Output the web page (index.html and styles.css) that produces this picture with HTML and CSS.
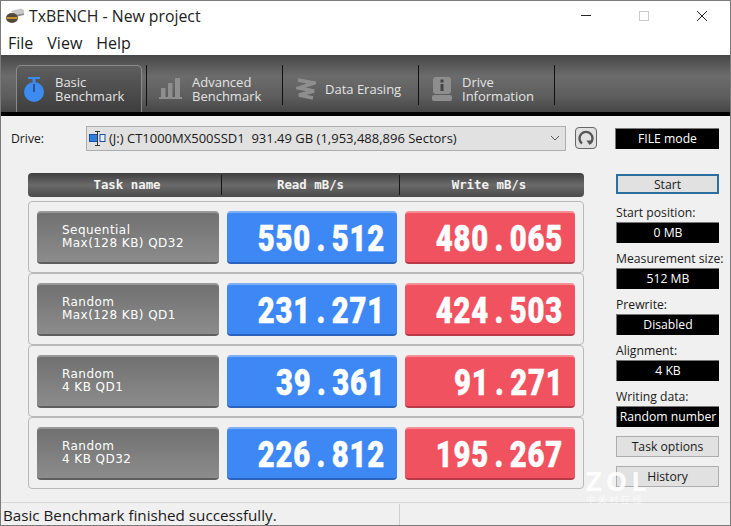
FILE: index.html
```html
<!DOCTYPE html>
<html lang="en">
<head>
<meta charset="utf-8">
<title>TxBENCH - New project</title>
<link rel="stylesheet" href="styles.css">
</head>
<body>
<div class="window">
  <header class="titlebar">
    <svg class="app-icon" width="20" height="16" viewBox="0 0 20 16"><path d="M6 3 L16 0.5 L19 2 L19 6 L10 8 Z" fill="#c9c9c9"/><path d="M10 7 L19 5.5 L19 7 L10 9Z" fill="#8f8f8f"/><ellipse cx="7" cy="10" rx="6" ry="5" fill="#4f4a3c"/><path d="M1.5 9 H12.5 V11 H1.5Z" fill="#c98f2c"/></svg>
    <span class="app-title">TxBENCH - New project</span>
    <div class="win-controls">
      <svg width="12" height="12" viewBox="0 0 12 12"><path d="M1 5.5H11" stroke="#222" stroke-width="1"/></svg>
      <svg width="12" height="12" viewBox="0 0 12 12"><rect x="1.5" y="1.5" width="9" height="9" fill="none" stroke="#ccc"/></svg>
      <svg width="12" height="12" viewBox="0 0 12 12"><path d="M1 1L11 11M11 1L1 11" stroke="#222" stroke-width="1"/></svg>
    </div>
  </header>
  <nav class="menubar"><span>File</span><span>View</span><span>Help</span></nav>
  <div class="toolbar">
    <div class="tab tab-active">
      <svg width="20" height="25" viewBox="0 0 20 25"><rect x="4" y="0" width="12" height="2" fill="#3d8af0"/><rect x="8.5" y="2" width="3" height="3" fill="#3d8af0"/><circle cx="10" cy="15" r="10" fill="#3d8af0"/><path d="M10 7V15" stroke="#1d3a66" stroke-width="1.3"/></svg>
      <span class="tab-label">Basic<br>Benchmark</span>
    </div>
    <div class="tab tab-adv">
      <svg width="24" height="21" viewBox="0 0 24 21"><g fill="#8e8e8e"><rect x="2" y="10" width="4.5" height="9"/><rect x="9" y="5" width="4.5" height="14"/><rect x="16" y="0" width="5" height="19"/><rect x="0" y="19" width="23" height="2"/></g></svg>
      <span class="tab-label">Advanced<br>Benchmark</span>
    </div>
    <div class="tab tab-erase">
      <svg width="20" height="22" viewBox="0 0 20 22"><path d="M2 2L18 5L3 10L18 13L3 17L17 20" fill="none" stroke="#8e8e8e" stroke-width="3.6"/></svg>
      <span class="tab-label">Data Erasing</span>
    </div>
    <div class="tab tab-info">
      <svg width="20" height="24" viewBox="0 0 20 24"><rect x="1" y="0" width="18" height="17" rx="3" fill="#8e8e8e"/><rect x="8.5" y="2.5" width="3" height="3" fill="#444"/><rect x="8.5" y="7" width="3" height="7" fill="#444"/><rect x="0" y="18" width="20" height="6" rx="2" fill="#8e8e8e"/></svg>
      <span class="tab-label">Drive<br>Information</span>
    </div>
  </div>
  <div class="content">
    <div class="drive-row">
      <span class="drive-label">Drive:</span>
      <div class="drive-select">
        <svg width="17" height="15" viewBox="0 0 17 15"><rect x="0.5" y="3.5" width="8" height="7" fill="#2f7de0" stroke="#1c4f9c"/><rect x="11" y="3.5" width="5" height="7" fill="#e8f0fa" stroke="#1c4f9c"/><path d="M6 0.5H11M8.5 0.5V14.5M6 14.5H11" stroke="#333" fill="none"/></svg>
        <span class="drive-text">(J:) CT1000MX500SSD1&nbsp; 931.49 GB (1,953,488,896 Sectors)</span>
        <svg class="chevron" width="10" height="6" viewBox="0 0 10 6"><path d="M1 1L5 5L9 1" fill="none" stroke="#555"/></svg>
      </div>
      <div class="refresh">
        <svg width="18" height="18" viewBox="0 0 18 18"><path d="M5 14.5A6.5 6.5 0 1 1 13 14.5" fill="none" stroke="#555" stroke-width="2.4"/><path d="M9.5 11.5H15.5L12.5 16Z" fill="#555"/></svg>
      </div>
      <div class="mode">FILE mode</div>
    </div>
    <div class="main">
      <section class="results">
        <div class="table-head"><span>Task name</span><span>Read mB/s</span><span>Write mB/s</span></div>
        <div class="row">
          <div class="task">Sequential<br>Max(128 KB) QD32</div>
          <div class="value read"><span class="num">550<span class="dot">.</span>512</span></div>
          <div class="value write"><span class="num">480<span class="dot">.</span>065</span></div>
        </div>
        <div class="row">
          <div class="task">Random<br>Max(128 KB) QD1</div>
          <div class="value read"><span class="num">231<span class="dot">.</span>271</span></div>
          <div class="value write"><span class="num">424<span class="dot">.</span>503</span></div>
        </div>
        <div class="row">
          <div class="task">Random<br>4 KB QD1</div>
          <div class="value read"><span class="num">39<span class="dot">.</span>361</span></div>
          <div class="value write"><span class="num">91<span class="dot">.</span>271</span></div>
        </div>
        <div class="row">
          <div class="task">Random<br>4 KB QD32</div>
          <div class="value read"><span class="num">226<span class="dot">.</span>812</span></div>
          <div class="value write"><span class="num">195<span class="dot">.</span>267</span></div>
        </div>
      </section>
      <aside class="side">
        <button class="btn btn-start">Start</button>
        <div class="field"><label>Start position:</label><div class="box">0 MB</div></div>
        <div class="field"><label>Measurement size:</label><div class="box">512 MB</div></div>
        <div class="field"><label>Prewrite:</label><div class="box">Disabled</div></div>
        <div class="field"><label>Alignment:</label><div class="box">4 KB</div></div>
        <div class="field"><label>Writing data:</label><div class="box">Random number</div></div>
        <button class="btn btn-options">Task options</button>
        <button class="btn btn-history">History</button>
      </aside>
    </div>
  </div>
  <footer class="statusbar"><span class="status-main">Basic Benchmark finished successfully.</span><span class="status-cell"></span></footer>
  <div class="watermark"><span class="wm-logo">ZOL</span><span class="wm-sub">中关村在线</span></div>
</div>
</body>
</html>
```
FILE: styles.css
```css
* { box-sizing: border-box; }
html, body { margin: 0; padding: 0; }
body { width: 731px; height: 526px; overflow: hidden; font-family: "Open Sans", "Noto Sans", sans-serif; color: #1a1a1a; }
.window { position: relative; width: 731px; height: 526px; border: 1px solid #7a7a7a; background: #f0f0f0; display: flex; flex-direction: column; overflow: hidden; }
.titlebar { height: 29px; background: #fff; display: flex; align-items: center; padding-left: 4px; flex: none; }
.app-icon { margin-right: 4px; }
.app-title { font-size: 15.8px; color: #222; }
.win-controls { margin-left: auto; display: flex; gap: 46px; padding-right: 22px; }
.menubar { height: 25px; background: #fff; display: flex; gap: 14px; padding-left: 7px; font-size: 16px; line-height: 26px; flex: none; }
.toolbar { height: 61px; flex: none; display: flex; align-items: flex-start; padding: 10px 0 0 15px; background: linear-gradient(#474747, #6c6c6c 35%, #5c5c5c 70%, #454545 94%, #000 94%); }
.tab { height: 47px; display: flex; align-items: center; color: #e4e4e4; font-size: 13px; line-height: 14px; position: relative; }
.tab::after { content: ""; position: absolute; right: 0; top: 0; width: 1px; height: 40px; background: #111; }
.tab-label { display: block; }
.tab-active { width: 126px; padding-left: 7px; gap: 11px; border: 1px solid #8a8a8a; border-bottom: none; border-radius: 5px 5px 0 0; background: linear-gradient(#5e5e5e, #3e3e3e); margin-right: 4px; }
.tab-active::after { display: none; }
.tab-adv { width: 137px; padding-left: 12px; gap: 9px; border-image: linear-gradient(#111 85%, transparent 85%) 1; border-left: 1px solid; }
.tab-erase { width: 136px; padding-left: 13px; gap: 9px; }
.tab-info { width: 136px; padding-left: 13px; gap: 10px; }
.content { flex: 1; display: flex; flex-direction: column; padding: 9px 11px 0 10px; min-height: 0; }
.drive-row { display: flex; align-items: center; height: 26px; flex: none; }
.drive-label { width: 75px; font-size: 12.2px; }
.drive-select { width: 480px; height: 25px; background: #e1e1e1; border: 1px solid #adadad; display: flex; align-items: center; padding-left: 2px; gap: 3px; font-size: 13px; }
.chevron { margin-left: auto; margin-right: 5px; }
.refresh { width: 22px; height: 22px; margin-left: 9px; border: 1px solid #666; border-radius: 4px; background: #e1e1e1; display: flex; align-items: center; justify-content: center; }
.mode { width: 104px; height: 21px; margin-left: 18px; background: #000; color: #fff; border: 1px solid #777; border-width: 1px 0 0 1px; text-align: center; font-size: 12.2px; line-height: 19px; }
.main { display: flex; flex: 1; min-height: 0; }
.results { width: 556px; margin-left: 17px; padding-top: 22px; }
.table-head { height: 24px; background: linear-gradient(#3f3f3f, #6a6a6a 50%, #4a4a4a); border-radius: 4px; display: grid; grid-template-columns: 193px 178px 185px; margin-bottom: 4px; color: #f2f2f2; font-family: "DejaVu Sans Mono", monospace; font-weight: 700; font-size: 12.4px; line-height: 23px; text-align: center; }
.table-head span:first-child { padding-left: 5px; }
.table-head span:last-child { padding-right: 6px; }
.table-head span + span { border-left: 1px solid #151515; height: 20px; line-height: 19px; margin-top: 2px; }
.row { height: 72px; border: 1px solid #b9b9b9; border-radius: 4px; padding: 9px 8px; display: grid; grid-template-columns: 182px 170px 170px; column-gap: 8px; }
.task { height: 53px; border-radius: 4px; background: linear-gradient(#717171, #8c8c8c); border-top: 2px solid #999; border-bottom: 2px solid #5f5f5f; color: #fff; font-family: "DejaVu Sans", sans-serif; font-size: 12px; letter-spacing: 0.45px; line-height: 13px; padding: 11px 0 0 25px; }
.value { height: 53px; border-radius: 4px; color: #fff; display: flex; justify-content: flex-end; padding-right: 12px; overflow: hidden; }
.num { display: block; flex: none; font-family: Roboto, "Liberation Sans", sans-serif; font-weight: 900; font-size: 37px; line-height: 51px; transform: scaleX(0.79); transform-origin: right center; letter-spacing: 1px; -webkit-text-stroke: 0.5px #fff; white-space: nowrap; }
.dot { margin: 0 7px; }
.read { background: #3d88f5; border-top: 2px solid #7fb0f5; border-bottom: 2px solid #2a62b8; }
.write { background: #f0525f; border-top: 2px solid #f58f97; border-bottom: 2px solid #b83a45; }
.side { width: 103px; margin-left: 32px; padding-top: 23px; display: flex; flex-direction: column; }
.btn { display: block; width: 103px; height: 21px; padding: 0; background: #e1e1e1; border: 1px solid #adadad; font-family: inherit; font-size: 12.2px; color: #1a1a1a; }
.btn-start { border: 2px solid #2a6f9f; margin-bottom: 9px; height: 20px; }
.field { margin-bottom: 3px; height: 43px; }
.field label { display: block; font-size: 12.2px; height: 19px; line-height: 19px; white-space: nowrap; }
.box { height: 21px; background: #000; color: #fff; border: 1px solid #777; border-width: 1px 0 0 1px; text-align: center; font-size: 12.2px; line-height: 19px; white-space: nowrap; }
.btn-options { margin-top: 3px; margin-bottom: 9px; }
.statusbar { height: 23px; flex: none; border-top: 1px solid #d7d7d7; display: flex; font-size: 15.2px; line-height: 23px; padding: 1px 0 0 2px; }
.status-main { width: 397px; border-right: 1px solid #d0d0d0; white-space: nowrap; }
.watermark { position: absolute; left: 585px; top: 466px; color: rgba(255,255,255,.9); display: flex; flex-direction: column; line-height: 1; }
.wm-logo { font-size: 27px; font-weight: 700; letter-spacing: 4px; }
.wm-sub { font-family: "Noto Sans CJK SC", sans-serif; font-size: 9px; letter-spacing: 2.6px; margin-top: 1px; color: rgba(255,255,255,.7); }
```
